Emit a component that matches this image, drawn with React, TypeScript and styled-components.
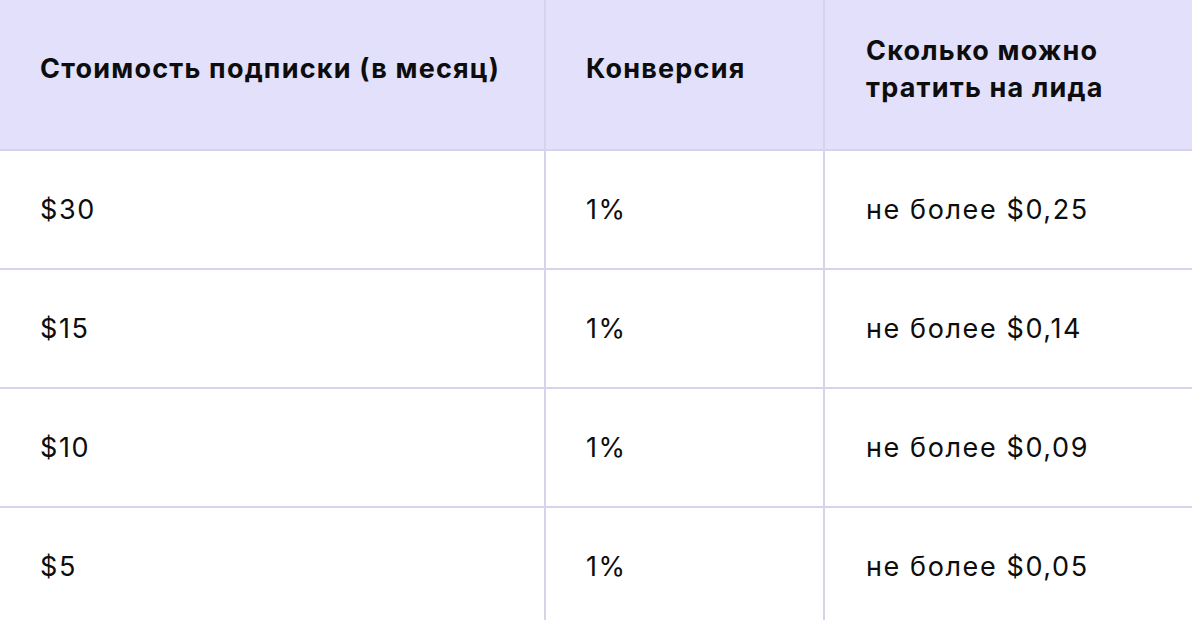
import React from "react";
import styled, { createGlobalStyle } from "styled-components";

const Global = createGlobalStyle`
  html, body { margin: 0; padding: 0; background: #ffffff; }
  body { font-family: "Inter", "Noto Sans", sans-serif; color: #0d0d0d; overflow: hidden; }
`;

const Table = styled.div`
  display: grid;
  grid-template-columns: 544px 2px 277px 2px 1fr;
  width: 1192px;
`;

const HeaderCell = styled.div<{ $pad: number }>`
  background: #e2e0fb;
  height: 149px;
  display: flex;
  align-items: center;
  padding-left: ${(p) => p.$pad}px;
  padding-bottom: 12px;
  font-size: 27px;
  font-weight: 700;
  line-height: 37px;
  letter-spacing: 1.2px;
  box-sizing: border-box;
`;

const Cell = styled.div<{ $pad: number }>`
  height: 117px;
  display: flex;
  align-items: center;
  padding-left: ${(p) => p.$pad}px;
  font-size: 27px;
  font-weight: 400;
  letter-spacing: 1.6px;
  box-sizing: border-box;
`;

const VLine = styled.div`
  background: #d6d4ea;
`;

const HLine = styled.div`
  grid-column: 1 / -1;
  height: 2px;
  background: #d6d4ea;
`;

const rows = [
  ["$30", "1%", "не более $0,25"],
  ["$15", "1%", "не более $0,14"],
  ["$10", "1%", "не более $0,09"],
  ["$5", "1%", "не более $0,05"],
];

export default function App() {
  return (
    <>
      <Global />
      <Table>
        <HeaderCell $pad={40}>Стоимость подписки (в месяц)</HeaderCell>
        <VLine />
        <HeaderCell $pad={40}>Конверсия</HeaderCell>
        <VLine />
        <HeaderCell $pad={41}>
          Сколько можно
          <br />
          тратить на лида
        </HeaderCell>
        {rows.map((r, i) => (
          <React.Fragment key={i}>
            <HLine />
            <Cell $pad={40}>{r[0]}</Cell>
            <VLine />
            <Cell $pad={40}>{r[1]}</Cell>
            <VLine />
            <Cell $pad={41}>{r[2]}</Cell>
          </React.Fragment>
        ))}
      </Table>
    </>
  );
}
